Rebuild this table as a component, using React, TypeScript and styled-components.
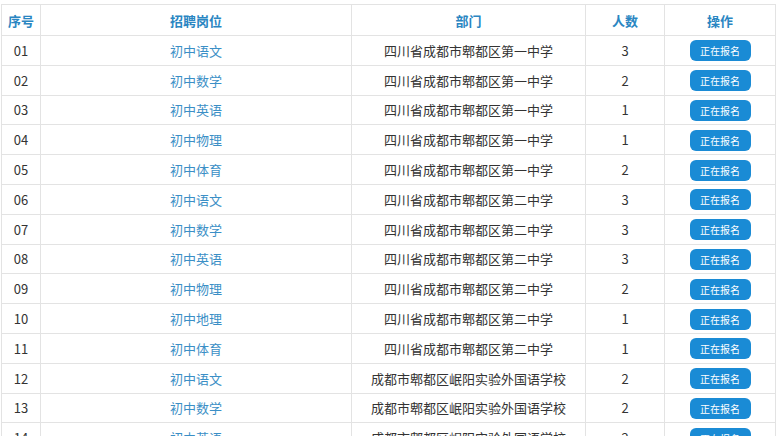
import React from "react";
import styled, { createGlobalStyle } from "styled-components";

const Global = createGlobalStyle`
  html, body { margin: 0; padding: 0; background: #fff; }
  body { font-family: "Microsoft YaHei", "Noto Sans CJK SC", "Noto Sans", sans-serif; }
`;

const Wrap = styled.div`
  padding: 4px 0 0 1px;
`;

const Table = styled.table`
  width: 775px;
  border-collapse: collapse;
  table-layout: fixed;
  font-size: 13px;
`;

const Th = styled.th<{ $w?: number }>`
  width: ${(p) => (p.$w ? `${p.$w}px` : "auto")};
  height: 30px;
  padding: 0;
  border: 1px solid #e3e3e3;
  color: #2a86c2;
  font-weight: bold;
  text-align: center;
  vertical-align: middle;
`;

const Td = styled.td<{ $tone?: "link" | "text" }>`
  height: 28.8px;
  padding: 0;
  border: 1px solid #e3e3e3;
  text-align: center;
  vertical-align: middle;
  color: ${(p) => (p.$tone === "link" ? "#3b8fc6" : "#333")};
  white-space: nowrap;
`;

const Btn = styled.span`
  display: inline-block;
  width: 61px;
  height: 21px;
  line-height: 21px;
  border-radius: 6px;
  background: #1a8bd5;
  color: #fff;
  font-size: 10px;
  text-align: center;
  vertical-align: middle;
`;

const A = "四川省成都市郫都区第一中学";
const B = "四川省成都市郫都区第二中学";
const C = "成都市郫都区岷阳实验外国语学校";

const rows: [string, string, string, number][] = [
  ["01", "初中语文", A, 3],
  ["02", "初中数学", A, 2],
  ["03", "初中英语", A, 1],
  ["04", "初中物理", A, 1],
  ["05", "初中体育", A, 2],
  ["06", "初中语文", B, 3],
  ["07", "初中数学", B, 3],
  ["08", "初中英语", B, 3],
  ["09", "初中物理", B, 2],
  ["10", "初中地理", B, 1],
  ["11", "初中体育", B, 1],
  ["12", "初中语文", C, 2],
  ["13", "初中数学", C, 2],
  ["14", "初中英语", C, 2],
];

export default function App() {
  return (
    <Wrap>
      <Global />
      <Table>
        <thead>
          <tr>
            <Th $w={38}>序号</Th>
            <Th $w={310}>招聘岗位</Th>
            <Th $w={233}>部门</Th>
            <Th $w={78}>人数</Th>
            <Th>操作</Th>
          </tr>
        </thead>
        <tbody>
          {rows.map(([no, pos, dep, n]) => (
            <tr key={no}>
              <Td>{no}</Td>
              <Td $tone="link">{pos}</Td>
              <Td>{dep}</Td>
              <Td>{n}</Td>
              <Td>
                <Btn>正在报名</Btn>
              </Td>
            </tr>
          ))}
        </tbody>
      </Table>
    </Wrap>
  );
}
